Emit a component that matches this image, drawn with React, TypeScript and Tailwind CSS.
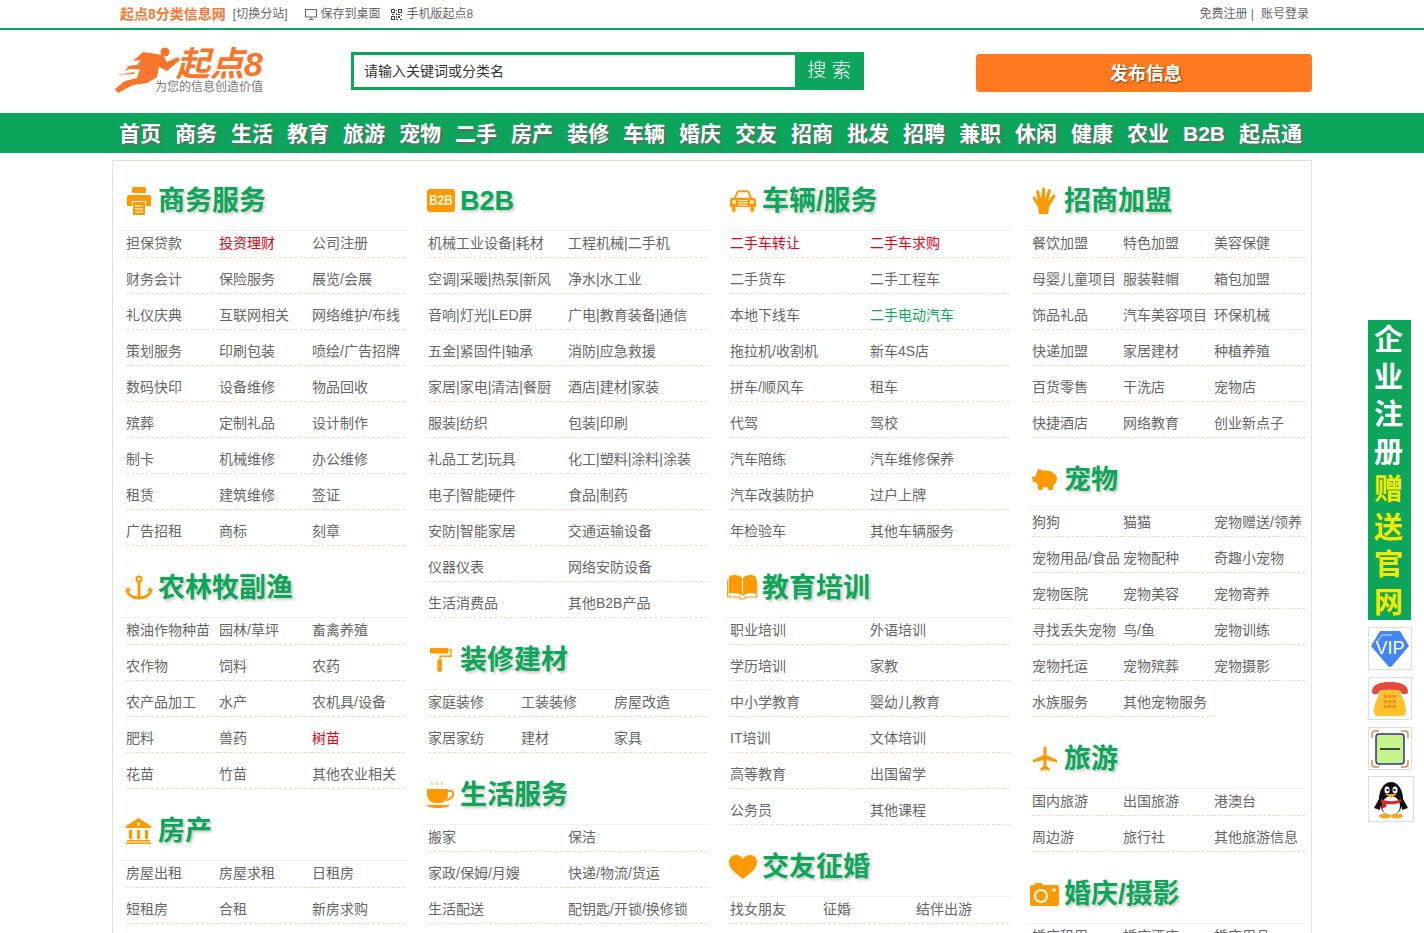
import type { ReactNode } from "react"

const FONT = "font-['Liberation_Sans','Noto_Sans_CJK_SC',sans-serif]"

type Item = string | { t: string; c: string }

const RED = "text-[#e60012]"
const GREEN = "text-[#0ca55b]"

// icons for section headings
const Printer = () => (
  <svg width="24" height="28" viewBox="0 0 24 28" fill="#ff9900">
    <rect x="5" y="0" width="14" height="6" rx="1" />
    <path d="M2 8h20a2 2 0 0 1 2 2v9h-5v-5H5v5H0v-9a2 2 0 0 1 2-2z" />
    <path d="M6 15h12v13H6z" />
    <path d="M8 19h8M8 22h8M8 25h8" stroke="#fff" strokeWidth="1" />
  </svg>
)
const B2bBadge = () => (
  <div className="flex h-[23px] w-[28px] items-center justify-center rounded-[3px] bg-[#ff9900] text-[15px] font-bold text-[#fff3d8]">
    <span className="[transform:scaleX(0.78)]">B2B</span>
  </div>
)
const Car = () => (
  <svg width="26" height="23" viewBox="0 0 28 24" fill="none">
    <path d="M5 10l3-7a2 2 0 0 1 2-1h8a2 2 0 0 1 2 1l3 7" stroke="#ff9900" strokeWidth="2" />
    <path d="M3 9h22a3 3 0 0 1 3 3v7H0v-7a3 3 0 0 1 3-3z" fill="#ff9900" />
    <rect x="2" y="19" width="4" height="5" rx="1" fill="#ff9900" />
    <rect x="22" y="19" width="4" height="5" rx="1" fill="#ff9900" />
    <path d="M9 12h10M9 14.5h10M9 17h10" stroke="#fff" strokeWidth="1" />
    <circle cx="4.5" cy="13.5" r="2" fill="#fff" />
    <circle cx="23.5" cy="13.5" r="2" fill="#fff" />
  </svg>
)
const Hand = () => (
  <svg width="25" height="27" viewBox="0 0 25 27" fill="#ff9900">
    <path d="M7 27l-1-7-5-8c-1-2 1-3 2-2l3 4L4 5c0-2 2-2 3-1l2 8L10 2c0-2 3-2 3 0l0 10 3-9c1-2 3-1 3 1l-3 10 5-6c2-1 3 0 2 2l-6 10-1 9z" />
  </svg>
)
const Anchor = () => (
  <svg width="28" height="25" viewBox="0 0 28 25" fill="none" stroke="#ff9900" strokeWidth="3">
    <circle cx="14" cy="4" r="2.6" strokeWidth="2" />
    <path d="M14 7v16" />
    <path d="M2 15c1 5 6 8 12 8s11-3 12-8" />
    <path d="M0 16l3-4 3 4z" fill="#ff9900" stroke="none" />
    <path d="M22 16l3-4 3 4z" fill="#ff9900" stroke="none" />
  </svg>
)
const Bank = () => (
  <svg width="25" height="26" viewBox="0 0 25 26" fill="#ff9900">
    <path d="M12.5 0L25 8v2H0V8z" />
    <circle cx="12.5" cy="6" r="1.6" fill="#fff" />
    <rect x="3" y="12" width="3" height="9" />
    <rect x="11" y="12" width="3" height="9" />
    <rect x="19" y="12" width="3" height="9" />
    <rect x="1" y="22" width="23" height="1.5" />
    <rect x="0" y="24.5" width="25" height="1.5" />
  </svg>
)
const Roller = () => (
  <svg width="22" height="25" viewBox="0 0 24 27" fill="#ff9900">
    <rect x="0" y="1" width="20" height="6" rx="1" />
    <path d="M20 3h3v7H11v4" fill="none" stroke="#ff9900" strokeWidth="1.5" />
    <rect x="8" y="13" width="5" height="14" rx="2" />
  </svg>
)
const Cup = () => (
  <svg width="30" height="27" viewBox="0 0 30 27" fill="#ff9900">
    <path d="M6 1c-1 1 1 2 0 3M11 1c-1 1 1 2 0 3M16 1c-1 1 1 2 0 3" fill="none" stroke="#ff9900" strokeWidth="1" />
    <path d="M1 8h21v5c0 5-4 9-8 9H9c-4 0-8-4-8-9z" />
    <path d="M22 10h3c4 0 3 8-5 9" fill="none" stroke="#ff9900" strokeWidth="2" />
    <path d="M0 24h24c-2 2-5 3-12 3S2 26 0 24z" />
  </svg>
)
const Books = () => (
  <svg width="31" height="26" viewBox="0 0 31 26" fill="#ff9900">
    <path d="M2 3c0-2 2-3 5-3s7 1 8 3v18c-2-2-5-3-8-3s-4 0-5 1z" />
    <path d="M29 3c0-2-2-3-5-3s-7 1-8 3v18c2-2 5-3 8-3s4 0 5 1z" />
    <path d="M0.7 5v17h11l2 2h3l2-2h11V5" fill="none" stroke="#ff9900" strokeWidth="1.2" />
  </svg>
)
const Heart = () => (
  <svg width="28" height="24" viewBox="0 0 28 24" fill="#ff9900">
    <path d="M14 24C5 17 0 13 0 7c0-4 3-7 7-7 3 0 5.500 1.500 7 4 1.500-2.500 4-4 7-4 4 0 7 3 7 7 0 6-5 10-14 17z" />
  </svg>
)
const Pig = () => (
  <svg width="25" height="21" viewBox="0 0 25 21" fill="#ff9900">
    <ellipse cx="14" cy="10" rx="11" ry="8.500" />
    <path d="M6 0c3 0 5 2 6 4L3 9z" />
    <path d="M0 8h5v5H1z" />
    <rect x="6" y="15" width="5" height="6" rx="1" />
    <rect x="16" y="15" width="5" height="6" rx="1" />
  </svg>
)
const Plane = () => (
  <svg width="24" height="25" viewBox="0 0 24 25" fill="#ff9900">
    <path d="M10.500 2c0-2 3-2 3 0v7l10.500 5v2.500l-10.500-2.500v6l3 2.500v2.500l-4.500-1.500-4.500 1.500v-2.500l3-2.500v-6L0 16.500V14l10.500-5z" />
  </svg>
)
const Camera = () => (
  <svg width="29" height="24" viewBox="0 0 29 24" fill="#ff9900">
    <path d="M2 3h3V1h7v2h15a2 2 0 0 1 2 2v17a2 2 0 0 1-2 2H2a2 2 0 0 1-2-2V5a2 2 0 0 1 2-2z" />
    <circle cx="11" cy="14" r="6" fill="none" stroke="#fff" strokeWidth="2" />
    <circle cx="24" cy="8" r="1.700" fill="#fff" />
  </svg>
)

function Section({
  icon,
  title,
  items,
  cols,
  wide,
}: {
  icon: ReactNode
  title: string
  items: Item[]
  cols: string
  wide?: string
}) {
  return (
    <section>
      <h2 className={"flex h-[60px] items-center border-b border-[#f2f2f2] " + (wide ?? "")}>
        <span className="flex w-[38px] shrink-0 items-center justify-center pr-[1px]">{icon}</span>
        <span className="pt-[2px] text-[27px] font-bold text-[#0ca55b] [text-shadow:2px_2px_3px_#c9c9c0]">{title}</span>
      </h2>
      <ul className={"ml-[6px] grid gap-y-[9px] " + cols}>
        {items.map((it, i) => {
          const t = typeof it === "string" ? it : it.t
          const c = typeof it === "string" ? "text-[#666]" : it.c
          return (
            <li
              key={i}
              className={"h-[27px] overflow-hidden whitespace-nowrap border-b border-dashed border-[#e8dcc8] text-[14px] leading-[25px] " + c}
            >
              {t}
            </li>
          )
        })}
      </ul>
    </section>
  )
}

const C3 = "grid-cols-[repeat(3,93px)]"
const C2 = "grid-cols-[repeat(2,140px)]"
const C4 = "grid-cols-[repeat(3,91px)]"
const W4 = "w-[280px]"

const nav = ["首页", "商务", "生活", "教育", "旅游", "宠物", "二手", "房产", "装修", "车辆", "婚庆", "交友", "招商", "批发", "招聘", "兼职", "休闲", "健康", "农业", "B2B", "起点通"]

export default function App() {
  return (
    <div className={"relative h-[933px] w-full overflow-hidden bg-white " + FONT}>
      {/* top bar */}
      <div className="h-[30px] border-b-2 border-[#0ca55b]">
        <div className="mx-auto flex h-[28px] w-[1200px] items-center pl-[8px] pr-[3px] text-[12px] text-[#666]">
          <span className="text-[14px] font-bold text-[#f47a37]">起点8分类信息网</span>
          <span className="ml-[7px]">[切换分站]</span>
          <svg className="ml-[18px]" width="12" height="11" viewBox="0 0 12 11" fill="none" stroke="#666">
            <rect x="0.5" y="0.5" width="11" height="7.500" />
            <path d="M3.500 10.500h5M6 8v2" />
          </svg>
          <span className="ml-[3px]">保存到桌面</span>
          <svg className="ml-[11px]" width="11" height="11" viewBox="0 0 11 11" fill="#444">
            <path d="M0 0h4v4H0zM7 0h4v4H7zM0 7h4v4H0z" />
            <path d="M5 1h1v1H5zM5 4h1v2H5zM1 5h2v1H1zM7 5h2v1H7zM10 6h1v1h-1zM5 7h1v2H5zM7 7h2v2H7zM5 10h2v1H5zM9 10h2v1H9z" />
            <path d="M1 1h2v2H1zM8 1h2v2H8zM1 8h2v2H1z" fill="#fff" />
          </svg>
          <span className="ml-[4px]">手机版起点8</span>
          <span className="ml-auto">免费注册 |</span>
          <span className="ml-[7px]">账号登录</span>
        </div>
      </div>

      {/* logo, search, publish */}
      <div className="mx-auto flex h-[83px] w-[1200px] items-start">
        <div className="relative ml-[3px] mt-[17px] h-[50px] w-[236px] shrink-0">
          <svg className="absolute left-0 top-0" width="66" height="46" viewBox="0 0 66 46" fill="#f8762b">
            <circle cx="50" cy="5" r="4.500" />
            <path d="M28 5l20 3 4 7 11-5 2 3-13 11-8-4-2 10-10 6-14 2-15 8-3-4 10-8 12-3 3-9-10 0-5 2 4-5 8-1 4-5-8 1z" />
            <path d="M2 28l18-3-1 2zM10 20l10-2-1 2z" />
          </svg>
          <span className="absolute left-[61px] top-[2px] text-[34px] font-bold italic leading-[30px] text-[#f8762b]">起点8</span>
          <span className="absolute left-[40px] top-[32px] text-[12px] leading-[16px] text-[#777]">为您的信息创造价值</span>
        </div>
        <div className="mt-[22px] flex h-[38px] w-[513px] shrink-0 border-[3px] border-[#0ca55b]">
          <div className="flex-1 pl-[10px] text-[14px] leading-[32px] text-[#333]">请输入关键词或分类名</div>
          <div className="flex w-[66px] items-center justify-center bg-[#0ca55b] pl-[2px] text-[19px] font-light text-white">搜 索</div>
        </div>
        <div className="ml-[112px] mt-[24px] flex h-[38px] w-[336px] items-center justify-center rounded-[4px] bg-[#ff7a1f] pl-[4px] pt-[3px] text-[18px] font-bold text-white [text-shadow:1px_1px_2px_#7a4010]">
          发布信息
        </div>
      </div>

      {/* nav */}
      <div className="h-[40px] bg-[#0ca55b]">
        <div className="mx-auto flex h-full w-[1200px] items-center gap-[14px] pl-[7px] pt-[2px] text-[21px] font-bold text-white [text-shadow:2px_2px_2px_#5e6e64]">
          {nav.map((n) => (
            <span key={n}>{n}</span>
          ))}
        </div>
      </div>

      {/* categories */}
      <div className="mx-auto mt-[7px] flex h-[800px] w-[1200px] gap-[14px] overflow-hidden border border-[#eadfd0] pl-[7px] pt-[10px]">
        <div className="flex w-[288px] shrink-0 flex-col gap-3">
          <Section
            icon={<Printer />}
            title="商务服务"
            cols={C3}
            items={["担保贷款", { t: "投资理财", c: RED }, "公司注册", "财务会计", "保险服务", "展览/会展", "礼仪庆典", "互联网相关", "网络维护/布线", "策划服务", "印刷包装", "喷绘/广告招牌", "数码快印", "设备维修", "物品回收", "殡葬", "定制礼品", "设计制作", "制卡", "机械维修", "办公维修", "租赁", "建筑维修", "签证", "广告招租", "商标", "刻章"]}
          />
          <Section
            icon={<Anchor />}
            title="农林牧副渔"
            cols={C3}
            items={["粮油作物种苗", "园林/草坪", "畜禽养殖", "农作物", "饲料", "农药", "农产品加工", "水产", "农机具/设备", "肥料", "兽药", { t: "树苗", c: RED }, "花苗", "竹苗", "其他农业相关"]}
          />
          <Section
            icon={<Bank />}
            title="房产"
            cols={C3}
            items={["房屋出租", "房屋求租", "日租房", "短租房", "合租", "新房求购"]}
          />
        </div>

        <div className="flex w-[288px] shrink-0 flex-col gap-3">
          <Section
            icon={<B2bBadge />}
            title="B2B"
            cols={C2}
            items={["机械工业设备|耗材", "工程机械|二手机", "空调|采暖|热泵|新风", "净水|水工业", "音响|灯光|LED屏", "广电|教育装备|通信", "五金|紧固件|轴承", "消防|应急救援", "家居|家电|清洁|餐厨", "酒店|建材|家装", "服装|纺织", "包装|印刷", "礼品工艺|玩具", "化工|塑料|涂料|涂装", "电子|智能硬件", "食品|制药", "安防|智能家居", "交通运输设备", "仪器仪表", "网络安防设备", "生活消费品", "其他B2B产品"]}
          />
          <Section
            icon={<Roller />}
            title="装修建材"
            cols={C3}
            items={["家庭装修", "工装装修", "房屋改造", "家居家纺", "建材", "家具"]}
          />
          <Section
            icon={<Cup />}
            title="生活服务"
            cols={C2}
            items={["搬家", "保洁", "家政/保姆/月嫂", "快递/物流/货运", "生活配送", "配钥匙/开锁/换修锁"]}
          />
        </div>

        <div className="flex w-[288px] shrink-0 flex-col gap-3">
          <Section
            icon={<Car />}
            title="车辆/服务"
            cols={C2}
            items={[{ t: "二手车转让", c: RED }, { t: "二手车求购", c: RED }, "二手货车", "二手工程车", "本地下线车", { t: "二手电动汽车", c: GREEN }, "拖拉机/收割机", "新车4S店", "拼车/顺风车", "租车", "代驾", "驾校", "汽车陪练", "汽车维修保养", "汽车改装防护", "过户上牌", "年检验车", "其他车辆服务"]}
          />
          <Section
            icon={<Books />}
            title="教育培训"
            cols={C2}
            items={["职业培训", "外语培训", "学历培训", "家教", "中小学教育", "婴幼儿教育", "IT培训", "文体培训", "高等教育", "出国留学", "公务员", "其他课程"]}
          />
          <Section
            icon={<Heart />}
            title="交友征婚"
            cols={C3}
            items={["找女朋友", "征婚", "结伴出游"]}
          />
        </div>

        <div className="flex w-[280px] shrink-0 flex-col gap-3">
          <Section
            icon={<Hand />}
            title="招商加盟"
            cols={C4}
            wide={W4}
            items={["餐饮加盟", "特色加盟", "美容保健", "母婴儿童项目", "服装鞋帽", "箱包加盟", "饰品礼品", "汽车美容项目", "环保机械", "快递加盟", "家居建材", "种植养殖", "百货零售", "干洗店", "宠物店", "快捷酒店", "网络教育", "创业新点子"]}
          />
          <Section
            icon={<Pig />}
            title="宠物"
            cols={C4}
            wide={W4}
            items={["狗狗", "猫猫", "宠物赠送/领养", "宠物用品/食品", "宠物配种", "奇趣小宠物", "宠物医院", "宠物美容", "宠物寄养", "寻找丢失宠物", "鸟/鱼", "宠物训练", "宠物托运", "宠物殡葬", "宠物摄影", "水族服务", "其他宠物服务"]}
          />
          <Section
            icon={<Plane />}
            title="旅游"
            cols={C4}
            wide={W4}
            items={["国内旅游", "出国旅游", "港澳台", "周边游", "旅行社", "其他旅游信息"]}
          />
          <Section
            icon={<Camera />}
            title="婚庆/摄影"
            cols={C4}
            wide={W4}
            items={["婚庆租用", "婚庆酒店", "婚庆用品"]}
          />
        </div>
      </div>

      {/* floating side bar */}
      <div className="absolute left-[1368px] top-[320px] flex w-[46px] flex-col items-start gap-[7px]">
        <div className="flex h-[300px] w-[43px] flex-col items-center bg-[#0ca55b] pr-[2px] pt-[2px] text-[29px] font-bold leading-[37.5px] text-white">
          <span>企</span>
          <span>业</span>
          <span>注</span>
          <span>册</span>
          <span className="text-[#f5e900]">赠</span>
          <span className="text-[#f5e900]">送</span>
          <span className="text-[#f5e900]">官</span>
          <span className="text-[#f5e900]">网</span>
        </div>
        <div className="flex h-[43px] w-[44px] items-center justify-center border border-[#ddd] bg-white">
          <svg width="40" height="38" viewBox="0 0 40 38">
            <path d="M10 1h20l9 15-17 20a3 3 0 0 1-4 0L1 16z" fill="#4285f4" />
            <path d="M7 12l5-7h10" fill="none" stroke="#cfe0ff" strokeWidth="1" />
            <text x="20" y="24" textAnchor="middle" fontSize="18" fill="#fff" fontFamily="Liberation Sans">VIP</text>
          </svg>
        </div>
        <div className="flex h-[43px] w-[44px] items-center justify-center border border-[#ddd] bg-white">
          <svg width="38" height="36" viewBox="0 0 38 36">
            <path d="M1 11C1 3 10 1 19 1s18 2 18 10c0 3-7 3-7 0 0-3-22-3-22 0 0 3-7 3-7 0z" fill="#e5483f" />
            <path d="M10 9h18c3 6 7 14 7 21 0 4-2 5-5 5H8c-3 0-5-1-5-5 0-7 4-15 7-21z" fill="#ffc22e" />
            <path d="M13 14h12v3H13zM13 19h12v3H13zM13 24h12v3H13z" fill="#f68b1f" />
            <path d="M16.500 14v13M21 14v13" stroke="#ffc22e" strokeWidth="1.200" />
          </svg>
        </div>
        <div className="flex h-[43px] w-[44px] items-center justify-center border border-[#ddd] bg-white">
          <svg width="38" height="38" viewBox="0 0 38 38" fill="none">
            <path d="M1 8V4a3 3 0 0 1 3-3h4M30 1h4a3 3 0 0 1 3 3v4M1 30v4a3 3 0 0 0 3 3h4M30 37h4a3 3 0 0 0 3-3v-4" stroke="#e08a3c" strokeWidth="1.500" />
            <rect x="5" y="4" width="28" height="30" rx="3" fill="#c4f58c" stroke="#3b3184" strokeWidth="1.500" />
            <path d="M9 19h20" stroke="#444" strokeWidth="2" />
          </svg>
        </div>
        <div className="-mt-[1px] flex h-[46px] w-[46px] items-center justify-center border border-[#ddd] bg-white">
          <svg width="36" height="40" viewBox="0 0 36 40">
            <ellipse cx="18" cy="20" rx="12" ry="17" fill="#111" />
            <path d="M7 18L1 29l6 2zM29 18l6 11-6 2z" fill="#111" />
            <ellipse cx="18" cy="27" rx="9" ry="10" fill="#fff" />
            <ellipse cx="14" cy="11" rx="2.500" ry="3.500" fill="#fff" />
            <ellipse cx="22" cy="11" rx="2.500" ry="3.500" fill="#fff" />
            <circle cx="14.500" cy="11" r="1.200" fill="#111" />
            <circle cx="21.500" cy="11" r="1.200" fill="#111" />
            <path d="M12 15h12l-6 4z" fill="#f9a620" />
            <path d="M8 20c6 3 14 3 20 0v3c-6 3-14 3-20 0z" fill="#d8232a" />
            <path d="M10 22l-2 8 5-2 1-5z" fill="#d8232a" />
            <ellipse cx="12" cy="37" rx="6" ry="2.500" fill="#f9a620" />
            <ellipse cx="24" cy="37" rx="6" ry="2.500" fill="#f9a620" />
          </svg>
        </div>
      </div>
    </div>
  )
}
